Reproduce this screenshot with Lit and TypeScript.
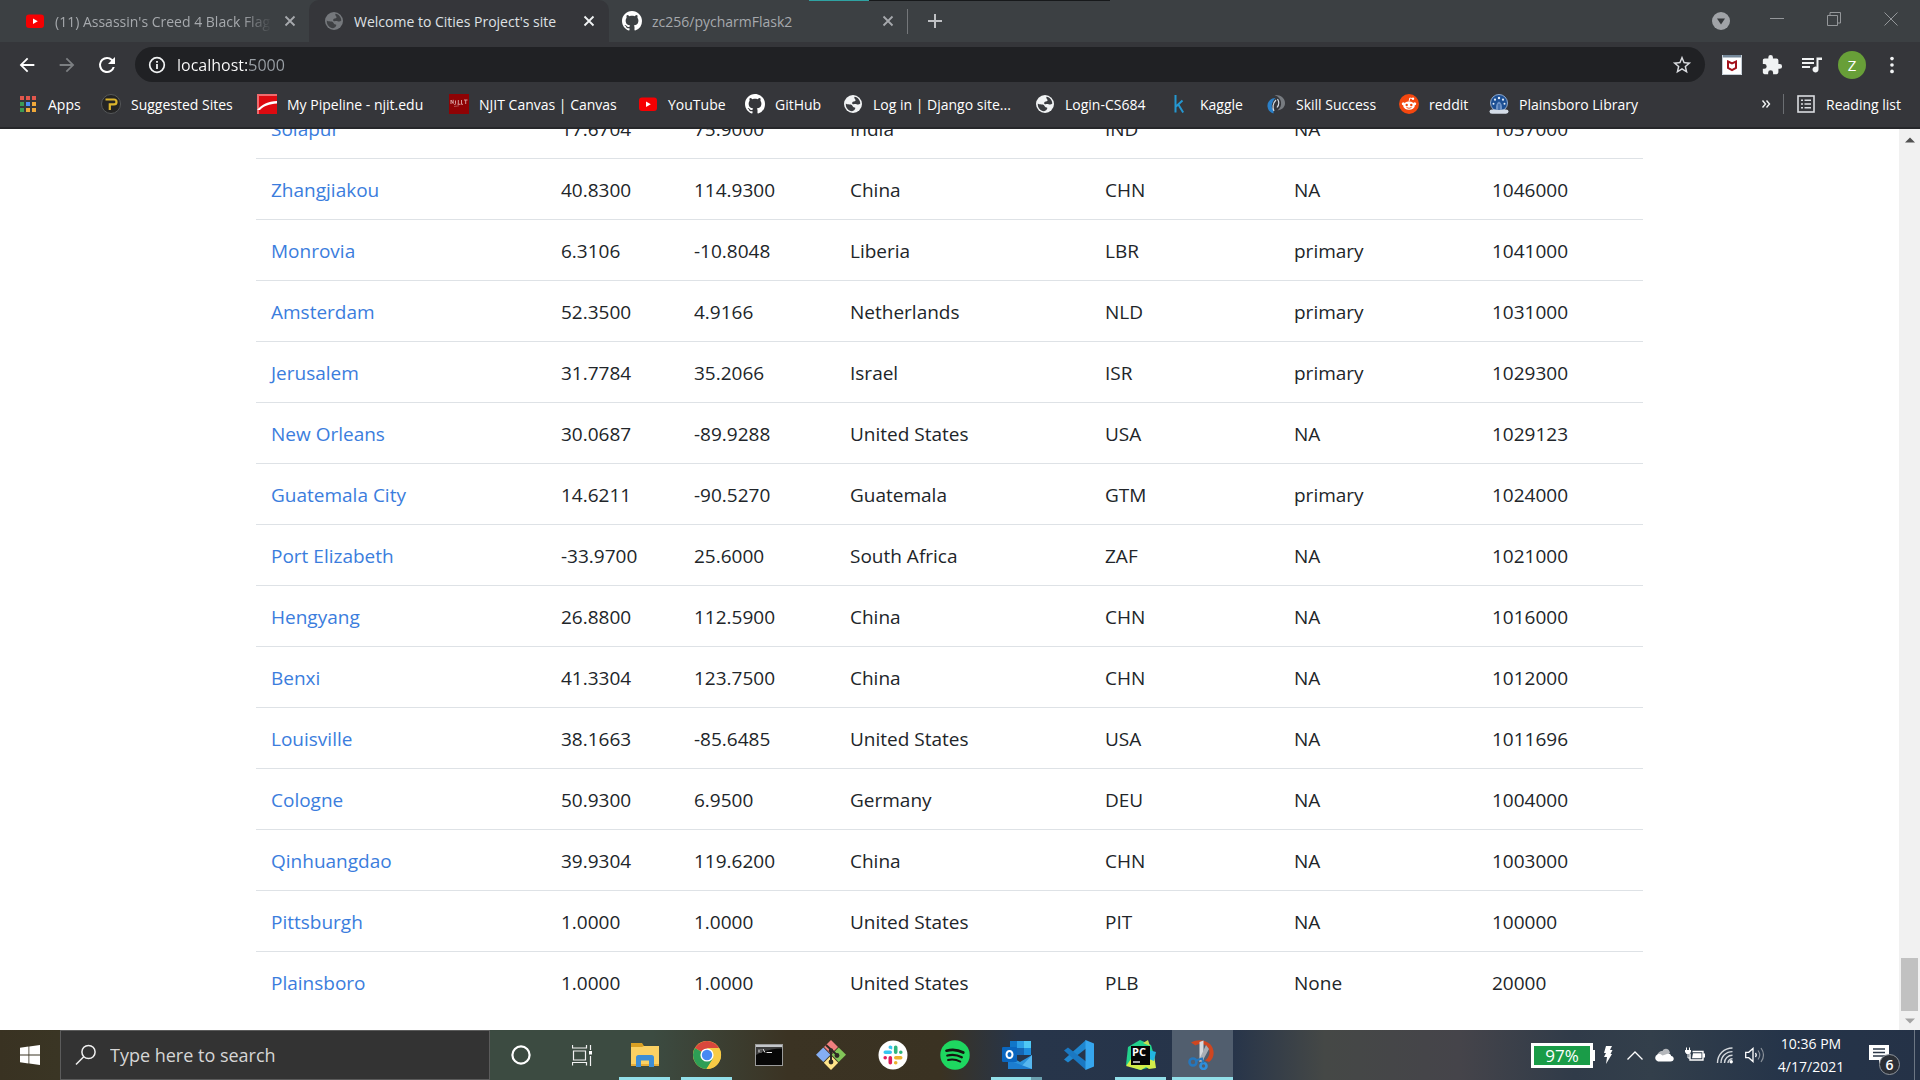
import { LitElement, html, css, svg, type TemplateResult } from "lit";
import { customElement, property } from "lit/decorators.js";
import { classMap } from "lit/directives/class-map.js";

const icon = (size: number, box: string, body: TemplateResult) =>
  html`<svg width=${size} height=${size} viewBox=${box} fill="none" aria-hidden="true">${body}</svg>`;

const OCTOCAT =
  "M8 0C3.58 0 0 3.58 0 8c0 3.54 2.29 6.53 5.47 7.59.4.07.55-.17.55-.38 0-.19-.01-.82-.01-1.49-2.01.37-2.53-.49-2.69-.94-.09-.23-.48-.94-.82-1.13-.28-.15-.68-.52-.01-.53.63-.01 1.08.58 1.23.82.72 1.21 1.87.87 2.33.66.07-.52.28-.87.51-1.07-1.78-.2-3.64-.89-3.64-3.95 0-.87.31-1.59.82-2.15-.08-.2-.36-1.02.08-2.12 0 0 .67-.21 2.2.82.64-.18 1.32-.27 2-.27s1.36.09 2 .27c1.53-1.04 2.2-.82 2.2-.82.44 1.1.16 1.92.08 2.12.51.56.82 1.27.82 2.15 0 3.07-1.87 3.75-3.65 3.95.29.25.54.73.54 1.48 0 1.07-.01 1.93-.01 2.2 0 .21.15.46.55.38A8.01 8.01 0 0 0 16 8c0-4.42-3.58-8-8-8z";

const youtube = icon(20, "0 0 20 20", svg`
  <rect x="1" y="3.500" width="18" height="13.500" rx="3" fill="#f60002"/><path d="M8 7.400v5.600l4.800-2.800z" fill="#fff"/>`);
const globeIcon = (bg: string, fg: string) => icon(20, "0 0 20 20", svg`
  <circle cx="10" cy="10" r="9" fill=${bg}/>
  <path d="M11.500 2.800C15 3.300 17.300 6.500 17.300 9.600c-1 1.100-2.600 1.200-3.800.6-1.200-.5-2.800.4-4-.2-1-.8-.1-2.300 1.300-2.500 1.600-.2 2.200-1 1.500-2-.9-.9-1.300-1.800-.8-2.700z" fill=${fg}/>
  <path d="M2.800 9.500c1.500 1.300 3.400.7 5 1 1.800.3 1.500 2.200 2.800 2.700 1 .4 1.900.2 1.700 1.100-.3 1.400-1.700 2.600-3.300 3C5.300 16.900 2.500 13.600 2.800 9.500z" fill=${fg}/>`);
const octocat = icon(20, "0 0 16 16", svg`<path d=${OCTOCAT} fill="#fff"/>`);
const cross = icon(16, "0 0 16 16", svg`<path d="M3.500 3.500l9 9m0-9l-9 9" stroke="currentColor" stroke-width="1.800"/>`);

const apps = icon(20, "0 0 20 20", svg`
  <g><rect x="2" y="2" width="4" height="4" fill="#e2574c"/><rect x="8" y="2" width="4" height="4" fill="#e2574c"/><rect x="14" y="2" width="4" height="4" fill="#e2574c"/>
  <rect x="2" y="8" width="4" height="4" fill="#3c9a54"/><rect x="8" y="8" width="4" height="4" fill="#4a8df6"/><rect x="14" y="8" width="4" height="4" fill="#f0a93a"/>
  <rect x="2" y="14" width="4" height="4" fill="#3c9a54"/><rect x="8" y="14" width="4" height="4" fill="#f0a93a"/><rect x="14" y="14" width="4" height="4" fill="#f0a93a"/></g>`);
const suggested = icon(20, "0 0 20 20", svg`
  <circle cx="10" cy="10" r="9.500" fill="#242424" stroke="#55585a"/>
  <path d="M4.500 5.500h8.500q2.500 0 2.500 2.400T13 10.300H8.800V16" stroke="#dcb52c" stroke-width="2.200"/>`);
const pipeline = icon(20, "0 0 20 20", svg`
  <rect width="20" height="20" fill="#dd0a10"/><path d="M0 0h20v2H2v18H0z" fill="#f06a6d"/><path d="M0 16C5 10 11 7.500 20 7V9.500C12 10 7 12 3 16z" fill="#fff"/>`);
const canvasMark = icon(20, "0 0 20 20", svg`
  <rect width="20" height="20" fill="#8f0204"/>
  <path d="M2 10V6l2.200 3.500V5.800M6.500 6.500v3.300q0 1-1.200.8M9.300 6v4M8.500 10.300h3M12.500 6v4.300h1.500M15 6h3.500M16.700 6v4" stroke="#dba9a9" stroke-width=".9"/><path d="M5 12.500l5-.7" stroke="#c06a6a" stroke-width=".7"/>`);
const kaggle = icon(20, "0 0 20 20", svg`<path d="M5.500 1v17.500M12.500 6.500L6 12.500m2.300-2L13.200 18.500" stroke="#2597d0" stroke-width="2"/>`);
const skill = icon(20, "0 0 20 20", svg`
  <path d="M9.500 4C4 4 1 8.500 1.500 12.500c.3 3.500 2.500 6 6 7V16c-1.500-1.500-2-3-1.700-5C6.200 8.500 7.500 6 9.500 4z" fill="#2b80c8"/>
  <path d="M8.500 1c6-.5 10.500 3 10.500 8 0 4-2.500 6.500-7.500 7.500 2.800-2.500 4-5 3.500-8.500C14.500 5 12.500 2.500 8.500 1z" fill="#777b80"/>
  <path d="M8 17c-1.800-3-1.200-8 2-11M11.500 5c1.700 2.500 1.500 6-.5 8.500" stroke="#d7dee5" stroke-width="1.200"/>`);
const reddit = icon(20, "0 0 20 20", svg`
  <circle cx="10" cy="10" r="10" fill="#f4470f"/>
  <ellipse cx="10" cy="11.700" rx="5.800" ry="4.100" fill="#fff"/><circle cx="4.300" cy="9.800" r="1.500" fill="#fff"/><circle cx="15.700" cy="9.800" r="1.500" fill="#fff"/>
  <circle cx="7.700" cy="11" r="1.200" fill="#f4470f"/><circle cx="12.300" cy="11" r="1.200" fill="#f4470f"/>
  <path d="M7.500 13.500q2.500 1.600 5 0" stroke="#f4470f" stroke-width=".9"/><path d="M10 7.600l.8-3.600 2.800.6" stroke="#fff"/><circle cx="14" cy="4.700" r="1.200" fill="#fff"/>`);
const library = icon(20, "0 0 20 20", svg`
  <circle cx="10" cy="9" r="8.500" fill="#1c4f93" stroke="#8fa9cc"/>
  <path d="M.5 17.500q0-2 2.500-2h14q2.500 0 2.500 2T17 19.800H3q-2.500 0-2.500-2.300z" fill="#d5dde8"/><path d="M10 7.500c2.500 1.500 3.300 4 3 8H7c-.3-4 .5-6.500 3-8z" fill="#6d93c8"/><path d="M10 10v6" stroke="#1c4f93"/>
  <g fill="#e4edf8"><circle cx="10" cy="4" r="1.200"/><circle cx="6" cy="5.700" r="1.100"/><circle cx="14" cy="5.700" r="1.100"/><circle cx="4.500" cy="9.700" r="1"/><circle cx="15.500" cy="9.700" r="1"/></g>`);
const readingList = icon(20, "0 0 20 20", svg`
  <rect x="2" y="2" width="16" height="16" stroke="#dadce0" stroke-width="1.600"/>
  <path d="M5 6.300h2m1.500 0H15M5 10h2m1.500 0H15M5 13.700h2m1.500 0H15" stroke="#dadce0" stroke-width="1.500"/>`);

const arrowBack = icon(22, "0 0 24 24", svg`<path d="M20 11H7.830l5.590-5.590L12 4l-8 8 8 8 1.410-1.410L7.830 13H20v-2z" fill="#fff"/>`);
const arrowForward = icon(22, "0 0 24 24", svg`<path d="M12 4l-1.410 1.410L16.170 11H4v2h12.170l-5.580 5.590L12 20l8-8z" fill="#7c7f82"/>`);
const reload = icon(24, "0 0 24 24", svg`<path d="M17.650 6.350A7.960 7.960 0 0 0 12 4a8 8 0 1 0 7.730 10h-2.080A6 6 0 1 1 12 6c1.660 0 3.140.69 4.220 1.780L13 11h7V4l-2.350 2.350z" fill="#fff"/>`);
const info = icon(20, "0 0 20 20", svg`<circle cx="10" cy="10" r="7.300" stroke="#f1f3f4" stroke-width="1.700"/><path d="M10 9v5M10 6v1.800" stroke="#f1f3f4" stroke-width="1.800"/>`);
const star = icon(22, "0 0 24 24", svg`<path d="M22 9.240l-7.190-.62L12 2 9.190 8.630 2 9.240l5.460 4.730L5.820 21 12 17.270 18.180 21l-1.630-7.030L22 9.240zM12 15.400l-3.760 2.270 1-4.280-3.320-2.880 4.380-.38L12 6.100l1.710 4.040 4.380.38-3.320 2.880 1 4.280L12 15.400z" fill="#dadce0"/>`);
const shield = icon(20, "0 0 20 20", svg`
  <rect width="20" height="20" fill="#fff"/><path d="M0 0h20v2.500H0z" fill="#74889a"/><path d="M.5 0v19.500h19V0" stroke="#c5ced6"/>
  <path d="M6 6.500L10 8.500l4-2v6.500L10 15.200 6 13z" stroke="#a3121c" stroke-width="2"/>`);
const puzzle = icon(22, "0 0 24 24", svg`<path d="M20.500 11H19V7a2 2 0 0 0-2-2h-4V3.500a2.500 2.500 0 0 0-5 0V5H4c-1.100 0-1.990.9-1.990 2v3.800H3.500a2.700 2.700 0 0 1 0 5.400H2V20c0 1.100.9 2 2 2h3.800v-1.500a2.700 2.700 0 0 1 5.400 0V22H17a2 2 0 0 0 2-2v-4h1.500a2.500 2.500 0 0 0 0-5z" fill="#f1f3f4"/>`);
const queue = icon(24, "0 0 24 24", svg`<path d="M2 5h12v2H2zm0 4h12v2H2zm0 4h8v2H2z" fill="#f1f3f4"/><path d="M16 4.500h6V7h-3.500v9.500a3 3 0 1 1-2-2.800V4.500z" fill="#f1f3f4"/>`);
const dots = icon(22, "0 0 24 24", svg`<g fill="#f1f3f4"><circle cx="12" cy="5" r="2"/><circle cx="12" cy="12" r="2"/><circle cx="12" cy="19" r="2"/></g>`);
const plus = icon(16, "0 0 16 16", svg`<path d="M8 1v14M1 8h14" stroke="#bfc1c4" stroke-width="2"/>`);
const chevrons = icon(10, "0 0 10 10", svg`<path d="M1.500 1.500L4.500 5l-3 3.500M5.500 1.500L8.500 5l-3 3.500" stroke="#f1f3f4" stroke-width="1.400"/>`);
const tabSearch = icon(18, "0 0 18 18", svg`<circle cx="9" cy="9" r="9" fill="#a0a3a7"/><path d="M5 6.500h8L9 12.500z" fill="#35383b"/>`);
const minimise = icon(14, "0 0 14 14", svg`<path d="M0 6.500h14" stroke="#94979a"/>`);
const restore = icon(14, "0 0 14 14", svg`<path d="M.5 3.500h10v10H.5zM3 3.500V.500h10.500v10.500h-3" stroke="#94979a"/>`);
const closeWindow = icon(14, "0 0 14 14", svg`<path d="M.5.5l13 13m0-13l-13 13" stroke="#94979a"/>`);

const windowsLogo = icon(20, "0 0 20 20", svg`<path d="M0 2.800l8.500-1.200v8H0zM9.300 1.500L20 0v9.600H9.300zM0 10.400h8.500v8L0 17.200zM9.300 10.400H20V20L9.300 18.500z" fill="#fff"/>`);
const magnifier = icon(22, "0 0 22 22", svg`<circle cx="13.500" cy="8" r="6.600" stroke="#f0f0f0" stroke-width="1.500"/><path d="M8.700 12.800L1 20.500" stroke="#f0f0f0" stroke-width="1.500"/>`);
const cortana = icon(22, "0 0 22 22", svg`<circle cx="11" cy="11" r="8.600" stroke="#fff" stroke-width="2.200"/>`);
const taskView = icon(22, "0 0 22 22", svg`
  <path d="M1.500 7h12v9h-12zM.500 1v3h14V1M.500 21.500v-3h14v3M18.500 1v5M18.500 12v10" stroke="#f2f2f2" stroke-width="1.200"/><path d="M17 7h3v3.500h-3z" fill="#fff"/>`);
const explorer = icon(30, "0 0 30 30", svg`
  <path d="M1 3h11l2 3v4H1z" fill="#d9a023"/><path d="M1 7h11l2-1h15v20H1z" fill="#fbd163"/><path d="M1 24h28v2H1z" fill="#e9ae37"/>
  <path d="M6 27V17.500q0-2.500 2.500-2.500h13Q24 15 24 17.500V27h-5v-6.500h-8V27z" fill="#3d8ed6"/>`);
const chrome = icon(30, "0 0 30 30", svg`
  <circle cx="15" cy="15" r="14" fill="#f8cb45"/>
  <path d="M15 15L2.900 8A14 14 0 0 1 27.100 8z" fill="#d9473c"/><path d="M2.900 8A14 14 0 0 0 14.500 29L21.100 18.500 15 15z" fill="#2e9e55"/>
  <path d="M15 8h12.100A14 14 0 0 1 14.500 29L21.100 18.500z" fill="#f8cb45"/>
  <circle cx="15" cy="15" r="6.600" fill="#fff"/><circle cx="15" cy="15" r="5.200" fill="#4688f4"/>`);
const terminal = icon(28, "0 0 28 28", svg`
  <rect x=".5" y="3.500" width="27" height="21" fill="#070707" stroke="#9b9b9b"/><path d="M1 4h26v2H1z" fill="#c4c7ca"/><path d="M1 14Q12 8 27 7.500V6H1z" fill="#3c3c3c"/>
  <path d="M4 8.500v3M6 8.500v.8M6 10.700v.8M8 8l2 3.500M11.500 11.500H17" stroke="#e8e8e8"/>`);
const git = icon(30, "0 0 30 30", svg`
  <path d="M15 0l7 7-7 7-7-7z" fill="#f0807f"/><path d="M7.300 7.500l7.200 7.200-7.200 7.300L0 14.700z" fill="#85aef3"/><path d="M22.700 7.500L30 14.700 22.700 22l-7.200-7.300z" fill="#82c659"/><path d="M15 15.500l7.200 7.200L15 30l-7.200-7.300z" fill="#ffe48a"/>
  <path d="M10 5L21 15M15 10v11" stroke="#2d2a25" stroke-width="2"/><circle cx="15" cy="10.500" r="2.200" fill="#2d2a25"/><circle cx="15" cy="22" r="2.400" fill="#2d2a25"/><circle cx="21" cy="15.500" r="2.400" fill="#2d2a25"/>`);
const slack = icon(30, "0 0 30 30", svg`
  <circle cx="15" cy="15" r="14.500" fill="#fff"/>
  <g stroke-width="3.600" stroke-linecap="round">
  <path d="M7.300 12.300h4.900M12.300 7.200h0" stroke="#36c5f0"/><path d="M12.300 7h1.200v1.800" stroke="#36c5f0" stroke-width="1.500"/>
  <path d="M17.700 7.300v4.900M22.800 12.300h0" stroke="#2eb67d"/>
  <path d="M17.800 17.700h4.900M17.700 22.800h0" stroke="#ecb22e"/>
  <path d="M12.300 17.800v4.900M7.200 17.700h0" stroke="#e01e5a"/></g>`);
const spotify = icon(30, "0 0 30 30", svg`
  <circle cx="15" cy="15" r="14.700" fill="#1ed760"/><path d="M6.500 10.700c5.500-1.600 11.500-1 16.800 1.800" stroke="#15140f" stroke-width="2.700" stroke-linecap="round"/>
  <path d="M7.300 15.500c5-1.300 10-.7 14.500 1.700" stroke="#15140f" stroke-width="2.300" stroke-linecap="round"/><path d="M8 20c4.300-1 8.500-.4 12.300 1.600" stroke="#15140f" stroke-width="1.900" stroke-linecap="round"/>`);
const outlook = icon(30, "0 0 30 30", svg`
  <path d="M8 1h21v14H8z" fill="#1176c8"/><path d="M15 1h7v7h-7z" fill="#2d9fe6"/><path d="M22 1h7v7h-7z" fill="#4fc8f4"/><path d="M22 8h7v7h-7z" fill="#1d8ddd"/><path d="M15 8h7v7h-7z" fill="#1567b5"/>
  <path d="M6 15l12 7 12-7v14H6z" fill="#2b93dc"/><path d="M30 15v14H17z" fill="#57b7ef"/><path d="M6 20l24 9H6z" fill="#1c7dd0"/>
  <rect y="7" width="15" height="15" rx="1.200" fill="#0a66bf"/><ellipse cx="7.500" cy="14.500" rx="3" ry="3.500" stroke="#fff" stroke-width="2"/>`);
const vscode = icon(30, "0 0 30 30", svg`
  <path d="M22 0v8.500L4 22.500 0 19.500z" fill="#1f86cf"/><path d="M22 30v-8.500L4 7.500 0 10.500z" fill="#1a78c2"/><path d="M21.500 0L30 3.500v23L21.500 30z" fill="#36a6ee"/>`);
const pycharm = icon(30, "0 0 30 30", svg`
  <path d="M2 7L14 0l11 5 3 10-3 12-11 3L0 25z" fill="#22d18c"/><path d="M17 3l5-3 2 6z" fill="#c5e052"/><path d="M0 26l5-7 23-4 2 13-7 1-3-2-5 3z" fill="#d3ee4a"/><path d="M23 10l7 2-2 9-5-2z" fill="#23b5e0"/>
  <rect x="5" y="6" width="19" height="19" fill="#060606"/><path d="M7 22h7" stroke="#fff" stroke-width="1.300"/>
  <text x="6" y="15.500" font-family="Open Sans, sans-serif" font-size="11" font-weight="700" fill="#fff">PC</text>`);
const snip = icon(30, "0 0 30 30", svg`
  <path d="M3 2.500C9-1 17-.5 22 4c5 5 5 14-1 18l-4-1.500c5-4 5.500-9.500 3-13C17 3.500 11 3 7.500 5.500z" fill="#cf4620"/>
  <path d="M11.500 2l4-1.500V20l-4 2z" fill="#d8dade"/><path d="M18 5l3 4-7 13-3-2z" fill="#a9aeb5"/>
  <circle cx="5" cy="22" r="3.500" stroke="#2577bd" stroke-width="2.600"/><circle cx="15.500" cy="26" r="3" stroke="#2f8fdc" stroke-width="2.600"/><path d="M8 20.500l6-2 1.500 4.500" stroke="#2577bd" stroke-width="2"/>`);

const bolt = html`<svg width="10" height="18" viewBox="0 0 10 18" aria-hidden="true"><path d="M3 0h6L7 4h2.500L7.500 8H9L3 18l1-7H1l2-4H1z" fill="#fff"/></svg>`;
const caret = icon(16, "0 0 16 16", svg`<path d="M.5 12.500L8 5l7.500 7.500" stroke="#fff" stroke-width="1.300"/>`);
const cloud = icon(20, "0 0 20 20", svg`<path d="M3 11.500C3 8 6 6 8.500 6 10 2.500 15.500 3 16 8l-6 4z" fill="#b4b7bb"/><path d="M4 16.500a3.700 3.700 0 0 1-.5-7c2-1 4 0 5 1l4.500-1.500c3-.8 4 .5 4.200 2 3.500.5 3.500 5.500-.7 5.500z" fill="#fff"/>`);
const plugged = icon(20, "0 0 20 20", svg`<path d="M5 8.500V15h13V6.500H7.500" stroke="#fff" stroke-width="1.400"/><path d="M8 8.300h8.500v5H7z" fill="#fff"/><path d="M18 8.500h2v4h-2zM0 5h6v2L4.500 9h-3L0 7z" fill="#fff"/><path d="M1.500 2.500V5M4.500 2.500V5M3 9v4h2" stroke="#fff"/>`);
const wifi = icon(18, "0 0 18 18", svg`<g stroke="#d5d9dd" stroke-width="1.400"><path d="M1.500 17C1.500 8.500 8 2 16.500 2"/><path d="M5 17C5 10.500 10 5.600 16.500 5.600"/><path d="M8.500 17c0-4.300 3.500-7.700 8-7.700"/><path d="M12 17c0-2.500 2-4.200 4.500-4.200"/></g><circle cx="15.200" cy="15.700" r="1.700" fill="#fff"/>`);
const volume = icon(20, "0 0 20 20", svg`<path d="M.7 7.300h3L8 3.500v13l-4.300-3.800h-3z" stroke="#fff" stroke-width="1.300"/><path d="M10.500 8q1.500 2 0 4" stroke="#fff" stroke-width="1.300"/><path d="M13 5.500q3.500 4.500 0 9M16 3q5 7 0 14" stroke="#8b929b" stroke-width="1.200"/>`);
const notes = icon(22, "0 0 22 22", svg`<path d="M0 1h20v15h-7l-3 4v-4H0z" fill="#fff"/><path d="M4 5h12M4 8.500h12M4 12h12" stroke="#2c3848" stroke-width="1.300"/>`);

interface Bookmark { label: string; mark: TemplateResult; }
const BOOKMARKS: Bookmark[] = [
  { label: "Apps", mark: apps },
  { label: "Suggested Sites", mark: suggested },
  { label: "My Pipeline - njit.edu", mark: pipeline },
  { label: "NJIT Canvas | Canvas", mark: canvasMark },
  { label: "YouTube", mark: youtube },
  { label: "GitHub", mark: octocat },
  { label: "Log in | Django site...", mark: globeIcon("#f1f3f4", "#3a3c40") },
  { label: "Login-CS684", mark: globeIcon("#f1f3f4", "#3a3c40") },
  { label: "Kaggle", mark: kaggle },
  { label: "Skill Success", mark: skill },
  { label: "reddit", mark: reddit },
  { label: "Plainsboro Library", mark: library },
];

const CITIES: string[][] = [
  ["Solapur", "17.6704", "75.9000", "India", "IND", "NA", "1057000"],
  ["Zhangjiakou", "40.8300", "114.9300", "China", "CHN", "NA", "1046000"],
  ["Monrovia", "6.3106", "-10.8048", "Liberia", "LBR", "primary", "1041000"],
  ["Amsterdam", "52.3500", "4.9166", "Netherlands", "NLD", "primary", "1031000"],
  ["Jerusalem", "31.7784", "35.2066", "Israel", "ISR", "primary", "1029300"],
  ["New Orleans", "30.0687", "-89.9288", "United States", "USA", "NA", "1029123"],
  ["Guatemala City", "14.6211", "-90.5270", "Guatemala", "GTM", "primary", "1024000"],
  ["Port Elizabeth", "-33.9700", "25.6000", "South Africa", "ZAF", "NA", "1021000"],
  ["Hengyang", "26.8800", "112.5900", "China", "CHN", "NA", "1016000"],
  ["Benxi", "41.3304", "123.7500", "China", "CHN", "NA", "1012000"],
  ["Louisville", "38.1663", "-85.6485", "United States", "USA", "NA", "1011696"],
  ["Cologne", "50.9300", "6.9500", "Germany", "DEU", "NA", "1004000"],
  ["Qinhuangdao", "39.9304", "119.6200", "China", "CHN", "NA", "1003000"],
  ["Pittsburgh", "1.0000", "1.0000", "United States", "PIT", "NA", "100000"],
  ["Plainsboro", "1.0000", "1.0000", "United States", "PLB", "None", "20000"],
];

interface Task { name: string; mark: TemplateResult; state?: "open" | "stacked" | "active"; }
const TASKS: Task[] = [
  { name: "Cortana", mark: cortana },
  { name: "Task View", mark: taskView },
  { name: "File Explorer", mark: explorer, state: "open" },
  { name: "Google Chrome", mark: chrome, state: "open" },
  { name: "Command Prompt", mark: terminal },
  { name: "Git", mark: git },
  { name: "Slack", mark: slack },
  { name: "Spotify", mark: spotify },
  { name: "Outlook", mark: outlook, state: "stacked" },
  { name: "Visual Studio Code", mark: vscode },
  { name: "PyCharm", mark: pycharm, state: "open" },
  { name: "Snipping Tool", mark: snip, state: "active" },
];

const reset = css`
  * { box-sizing: border-box; }
  button, input { font: inherit; color: inherit; background: none; border: 0; padding: 0; margin: 0; outline: 0; }
  button { display: flex; align-items: center; justify-content: center; flex: none; }
  a { color: inherit; text-decoration: none; }
  svg { display: block; flex: none; }
`;

@customElement("browser-tabs")
class BrowserTabs extends LitElement {
  static styles = [reset, css`
    :host { display: flex; position: relative; height: 42px; background: #3c4043; color: #a6a9ad; font-size: 14px; }
    .edge { position: absolute; top: 0; left: 809px; display: flex; width: 301px; height: 1px; background: #17191b; }
    .edge::before { content: ""; width: 60px; background: #2fa3a3; }
    .tab { display: flex; align-items: center; width: 300px; padding: 0 12px 0 15px; gap: 10px; }
    .tab.first { width: 309px; padding-left: 25px; padding-right: 11px; }
    .tab.current { background: #35363a; color: #dfe1e4; border-radius: 10px 10px 0 0; }
    .tab.last { padding-left: 13px; padding-right: 11px; width: 298px; }
    .title { flex: 1; min-width: 0; overflow: hidden; white-space: nowrap; }
    .first .title { mask-image: linear-gradient(90deg, #000 86%, transparent); }
    .current button { color: #f1f3f4; }
    .divider { width: 1px; height: 25px; align-self: center; background: #74777a; }
    .new { width: 54px; }
    .controls { display: flex; align-items: center; margin-left: auto; padding-right: 22px; gap: 43px; }
    .controls button { height: 38px; align-self: flex-start; }
    .controls .search { height: 42px; margin-right: -3px; }
  `];
  render() {
    return html`
      <div class="edge"></div>
      <div class="tab first">${youtube}<span class="title">(11) Assassin's Creed 4 Black Flag</span><button aria-label="Close tab">${cross}</button></div>
      <div class="tab current">${globeIcon("#75787c", "#3f4144")}<span class="title">Welcome to Cities Project's site</span><button aria-label="Close tab">${cross}</button></div>
      <div class="tab last">${octocat}<span class="title">zc256/pycharmFlask2</span><button aria-label="Close tab">${cross}</button></div>
      <div class="divider"></div>
      <button class="new" aria-label="New tab">${plus}</button>
      <div class="controls">
        <button class="search" aria-label="Search tabs">${tabSearch}</button>
        <button aria-label="Minimise">${minimise}</button>
        <button aria-label="Restore">${restore}</button>
        <button aria-label="Close window">${closeWindow}</button>
      </div>`;
  }
}

@customElement("browser-toolbar")
class BrowserToolbar extends LitElement {
  static styles = [reset, css`
    :host { display: block; background: #35363a; color: #fff; border-bottom: 2px solid #26272a; }
    .row { display: flex; align-items: center; height: 45px; padding: 0 8px 0 7px; }
    .nav { width: 40px; height: 36px; }
    .address { display: flex; align-items: center; flex: 1; height: 35px; margin: 0 7px 0 8px; padding: 0 12px; gap: 10px; border-radius: 18px; background: #202124; }
    .address input { flex: 1; min-width: 0; height: 24px; font-size: 16px; color: transparent; background: linear-gradient(90deg, #fff 73px, #9aa0a6 73px); background-clip: text; }
    .tools { display: flex; align-items: center; }
    .tools button { width: 40px; height: 36px; }
    .avatar { display: flex; align-items: center; justify-content: center; width: 28px; height: 28px; border-radius: 50%; background: #689f38; font-size: 15px; }
    .bookmarks { display: grid; grid-template-columns: 83px 156px 192px 189px 107px 98px 192px 135px 96px 133px 90px 160px 1fr; align-items: center; height: 40px; padding: 0 20px 6px 18px; font-size: 14px; }
    .bookmark { display: flex; align-items: center; gap: 10px; white-space: nowrap; }
    .extra { display: flex; align-items: center; justify-content: flex-end; gap: 12px; margin-right: -1px; }
    .divider { width: 1px; height: 20px; background: #6b6e72; }
    .reading { gap: 10px; }
  `];
  render() {
    return html`
      <div class="row">
        <button class="nav" aria-label="Back">${arrowBack}</button>
        <button class="nav" aria-label="Forward">${arrowForward}</button>
        <button class="nav" aria-label="Reload">${reload}</button>
        <div class="address">${info}<input aria-label="Address" .value=${"localhost:5000"} /><button aria-label="Bookmark this page">${star}</button></div>
        <div class="tools">
          <button aria-label="McAfee WebAdvisor">${shield}</button>
          <button aria-label="Extensions">${puzzle}</button>
          <button aria-label="Media">${queue}</button>
          <button><span class="avatar">Z</span></button>
          <button aria-label="Menu">${dots}</button>
        </div>
      </div>
      <nav class="bookmarks">
        ${BOOKMARKS.map((b) => html`<a class="bookmark" href="#">${b.mark}<span>${b.label}</span></a>`)}
        <div class="extra"><button aria-label="More bookmarks">${chevrons}</button><span class="divider"></span><button class="reading">${readingList}<span>Reading list</span></button></div>
      </nav>`;
  }
}

@customElement("city-table")
class CityTable extends LitElement {
  @property({ attribute: false }) rows: string[][] = [];
  static styles = [reset, css`
    :host { display: flex; min-height: 0; overflow: hidden; background: #fff; color: #212529; font-size: 19px; }
    .page { flex: 1; display: flex; flex-direction: column; justify-content: flex-end; align-items: center; padding: 0 19px 18px; min-width: 0; }
    table { width: 100%; max-width: 1387px; border-collapse: separate; border-spacing: 0; table-layout: fixed; flex: none; }
    td { height: 61px; padding: 2px 15px 0; border-top: 1px solid #dee2e6; line-height: 28px; white-space: nowrap; }
    a { color: #3b7ddd; }
    .city { width: 290px; } .lat { width: 133px; } .lng { width: 156px; } .country { width: 255px; } .code { width: 189px; } .capital { width: 198px; }
    .scroll { display: flex; flex-direction: column; align-items: center; width: 21px; background: #f1f1f1; }
    .scroll button { width: 21px; height: 19px; }
    .track { flex: 1; display: flex; align-items: flex-end; }
    .thumb { width: 17px; height: 53px; background: #c1c1c1; }
  `];
  render() {
    const names = ["city", "lat", "lng", "country", "code", "capital", "population"];
    return html`
      <div class="page">
        <table>
          <colgroup>${names.map((n) => html`<col class=${n} />`)}</colgroup>
          <tbody>${this.rows.map((r) => html`<tr>${r.map((c, i) => html`<td>${i === 0 ? html`<a href="#">${c}</a>` : c}</td>`)}</tr>`)}</tbody>
        </table>
      </div>
      <div class="scroll">
        <button aria-label="Scroll up">${icon(10, "0 0 10 10", svg`<path d="M0 8.500h10L5 3.500z" fill="#505050"/>`)}</button>
        <div class="track"><div class="thumb"></div></div>
        <button aria-label="Scroll down">${icon(10, "0 0 10 10", svg`<path d="M0 2.500h10L5 7.500z" fill="#a3a3a3"/>`)}</button>
      </div>`;
  }
}

@customElement("task-bar")
class TaskBar extends LitElement {
  static styles = [reset, css`
    :host { display: flex; height: 50px; color: #fff;
      background: linear-gradient(90deg, #393222 0, #3a3524 3%, #3c4b41 25%, #3c4b41 34%, #3b3323 41%, #3a3222 49%, #27354a 53%, #26344a 64%, #454846 69%, #45444a 76%, #303b49 82%, #333f4b 86%, #253449 93%, #253247 100%); }
    .start { width: 60px; }
    .search { display: flex; align-items: center; gap: 13px; width: 430px; padding: 0 14px; background: #333; border: 1px solid #5b5b5b; }
    .search input { flex: 1; min-width: 0; font-size: 18px; }
    .search input::placeholder { color: #d6d6d6; opacity: 1; }
    .tasks { display: flex; gap: 1px; margin-right: auto; }
    .task { width: 61px; height: 50px; }
    .open { background: linear-gradient(#92dfe9, #92dfe9) center bottom / 51px 3px no-repeat; }
    .stacked { background: linear-gradient(90deg, #92dfe9 40px, #6a9fae 40px) center bottom / 51px 3px no-repeat; }
    .active { background: linear-gradient(#92dfe9, #92dfe9) center bottom / 100% 3px no-repeat, #515e6e; }
    .tray { display: flex; align-items: center; }
    .tray button { height: 50px; }
    .charge { display: flex; align-items: center; }
    .level { width: 62px; height: 25px; border: 3px solid #fff; background: #1a9c48; font-size: 17px; line-height: 19px; text-align: center; }
    .nub { width: 2px; height: 11px; background: #fff; margin-right: 8px; }
    .icons { display: flex; align-items: center; gap: 11px; margin: 0 12px 0 14px; }
    .clock { width: 68px; font-size: 14px; line-height: 23px; text-align: center; white-space: nowrap; }
    .notify { position: relative; width: 44px; margin-left: 13px; }
    .count { position: absolute; left: 21px; top: 24px; width: 21px; height: 21px; border-radius: 50%; border: 1px solid #8f959c; background: #2b2f36; font-size: 14px; font-weight: 600; line-height: 19px; text-align: center; }
    .desktop { width: 6px; border-left: 1px solid #6c7683; margin-left: 12px; }
  `];
  render() {
    return html`
      <button class="start" aria-label="Start">${windowsLogo}</button>
      <label class="search">${magnifier}<input placeholder="Type here to search" aria-label="Search" /></label>
      <div class="tasks">${TASKS.map((t) => html`<button class=${classMap({ task: true, [t.state ?? "idle"]: true })} aria-label=${t.name}>${t.mark}</button>`)}</div>
      <div class="tray">
        <div class="charge"><span class="level">97%</span><span class="nub"></span>${bolt}</div>
        <div class="icons">
          <button aria-label="Hidden icons">${caret}</button><button aria-label="OneDrive">${cloud}</button><button aria-label="Power">${plugged}</button><button aria-label="Network">${wifi}</button><button aria-label="Volume">${volume}</button>
        </div>
        <div class="clock"><div>10:36 PM</div><div>4/17/2021</div></div>
        <button class="notify" aria-label="Notifications">${notes}<span class="count">6</span></button>
        <button class="desktop" aria-label="Show desktop"></button>
      </div>`;
  }
}

@customElement("app-root")
class AppRoot extends LitElement {
  static styles = css`
    :host { display: flex; flex-direction: column; height: 100vh; overflow: hidden; font-family: "Open Sans", "Noto Sans", sans-serif; }
    browser-tabs, browser-toolbar, task-bar { flex: none; }
    city-table { flex: 1; }
  `;
  render() {
    return html`<browser-tabs></browser-tabs><browser-toolbar></browser-toolbar><city-table .rows=${CITIES}></city-table><task-bar></task-bar>`;
  }
}
